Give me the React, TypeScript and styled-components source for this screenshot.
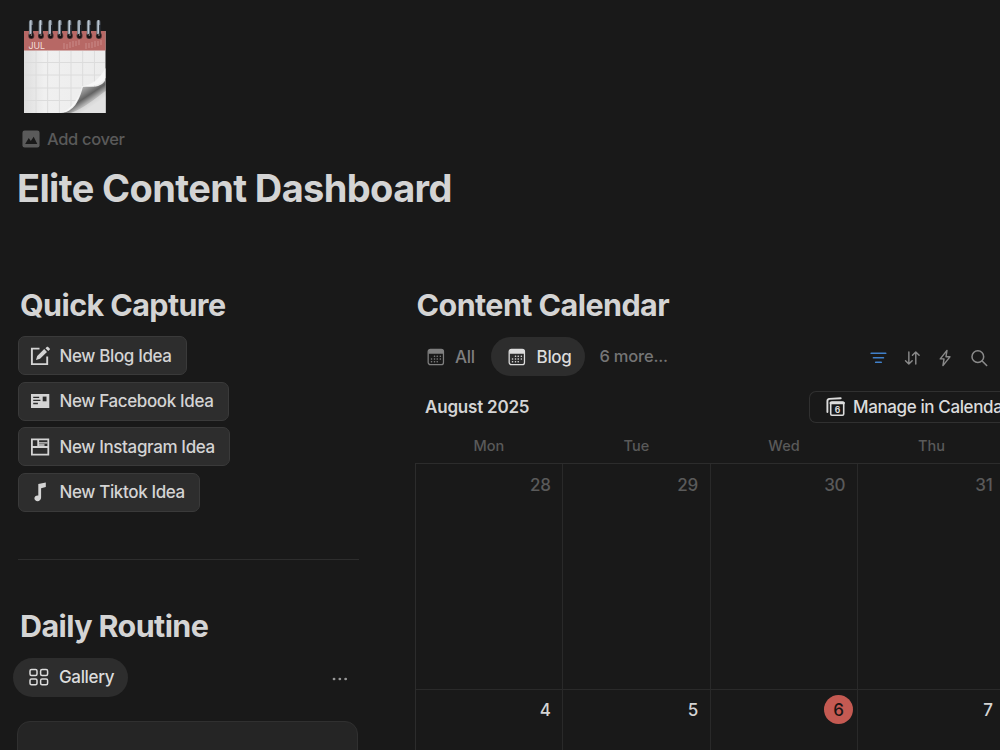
import type {FC, ReactNode} from 'react';
import styled, {createGlobalStyle, css} from 'styled-components';

const GlobalStyle = createGlobalStyle`
	* {
		box-sizing: border-box;
	}
	body {
		margin: 0;
		background: #191919;
		color: #d4d4d4;
		font-family: Inter, 'Liberation Sans', sans-serif;
		overflow: hidden;
	}
	svg {
		display: block;
		flex: none;
	}
`;

const Page = styled.div`
	width: 1000px;
	height: 750px;
	overflow: hidden;
	white-space: nowrap;
`;

const Header = styled.header`
	height: 286px;
	padding: 18px 0 0 18px;
`;

const AddCover = styled.div`
	display: flex;
	align-items: center;
	gap: 7px;
	height: 24px;
	margin: 12px 0 0 4px;
	color: #5a5a5a;
	font-size: 16.5px;
	font-weight: 500;
	letter-spacing: -0.35px;
`;

const Title = styled.h1`
	margin: 13px 0 0 -1px;
	font-size: 38px;
	line-height: 48px;
	font-weight: 700;
	letter-spacing: -0.63px;
`;

const Columns = styled.div`
	display: grid;
	grid-template-columns: 359px 585px;
	column-gap: 56px;
`;

const Sidebar = styled.section`
	padding-left: 18px;
`;

const Heading = styled.h2`
	margin: 0 0 0 2px;
	height: 38px;
	font-size: 30.5px;
	line-height: 37px;
	font-weight: 650;
	letter-spacing: -0.6px;
`;

const CaptureList = styled.div`
	display: flex;
	flex-direction: column;
	align-items: flex-start;
	gap: 6.6px;
	margin-top: 12px;
`;

const CaptureButton = styled.button`
	display: flex;
	align-items: center;
	gap: 9.5px;
	height: 39px;
	padding: 0 14.5px 0 11px;
	border: 1px solid #3a3a3a;
	border-radius: 7px;
	background: #2d2d2d;
	color: #d4d4d4;
	font-family: inherit;
	font-size: 17px;
	font-weight: 550;
	letter-spacing: -0.37px;
`;

const Divider = styled.hr`
	height: 1px;
	margin: 47px 0 0;
	border: 0;
	background: #2d2d2d;
`;

const RoutineHeading = styled(Heading)`
	margin-top: 47px;
`;

const RoutineBar = styled.div`
	display: flex;
	align-items: center;
	justify-content: space-between;
	margin: 13px 9px 0 -5px;
`;

const Tab = styled.div<{$active?: boolean}>`
	display: flex;
	align-items: center;
	gap: 10px;
	height: 39px;
	color: #7f7f7f;
	font-size: 17px;
	font-weight: 550;
	letter-spacing: -0.35px;
	${({$active}) =>
		$active &&
		css`
			padding: 0 14px 0 16px;
			border-radius: 20px;
			background: #2d2d2d;
			color: #dcdcdc;
		`}
`;

const BlogTab = styled(Tab)`
	gap: 11px;
	margin-left: 16px;
	padding-left: 17px;
`;

const GalleryCard = styled.div`
	height: 80px;
	margin: 24px 1px 0 -1px;
	border: 1px solid #303030;
	border-radius: 13px;
	background: #252525;
`;

const Calendar = styled.section`
	width: 585px;
`;

const CalendarHeading = styled(Heading)`
	margin-left: 1.5px;
	letter-spacing: -0.57px;
`;

const ViewBar = styled.div`
	display: flex;
	align-items: center;
	height: 39px;
	margin-top: 13px;
	padding-left: 12px;
`;

const MoreViews = styled.span`
	margin: -2px 0 0 14px;
	color: #757575;
	font-size: 16.5px;
	font-weight: 500;
	letter-spacing: -0.2px;
`;

const Tools = styled.div`
	display: flex;
	align-items: center;
	gap: 15.7px;
	margin: 3px 12px 0 auto;
	color: #8a8a8a;
`;

const MonthBar = styled.div`
	display: flex;
	align-items: center;
	justify-content: space-between;
	height: 32px;
	margin-top: 15px;
	padding-left: 10px;
	font-size: 17px;
	font-weight: 600;
	letter-spacing: -0.2px;
`;

const ManageButton = styled.button`
	display: flex;
	align-items: center;
	gap: 8px;
	width: 191px;
	height: 32px;
	padding: 0 0 0 15px;
	border: 1px solid #303030;
	border-right: 0;
	border-radius: 7px 0 0 7px;
	background: none;
	color: #dcdcdc;
	font-family: inherit;
	font-size: 17px;
	font-weight: 550;
	letter-spacing: -0.38px;
	overflow: hidden;
`;

const Weekdays = styled.div`
	display: grid;
	grid-template-columns: repeat(4, 147.6px);
	height: 40px;
	color: #5a5a5a;
	font-size: 14.5px;
	font-weight: 500;
	line-height: 45px;
	text-align: center;
`;

const DayGrid = styled.div`
	display: grid;
	grid-template-columns: repeat(4, 147.3px);
	grid-template-rows: 225.5px 70px;
	border-top: 1px solid #2c2c2c;
	border-left: 1px solid #2c2c2c;
`;

const Day = styled.div<{$muted?: boolean}>`
	display: flex;
	align-items: flex-start;
	justify-content: flex-end;
	padding: ${({$muted}) => ($muted ? 6 : 5)}px 11.5px 0 0;
	border-right: 1px solid #292929;
	border-bottom: 1px solid #2a2a2a;
	color: ${({$muted}) => ($muted ? '#5a5a5a' : '#d4d4d4')};
	font-size: 17px;
	font-weight: 500;
	line-height: 30px;
	letter-spacing: -0.2px;
`;

const Today = styled.span`
	width: 29px;
	height: 29px;
	margin-right: -7.5px;
	border-radius: 50%;
	background: #c45a52;
	color: #191414;
	text-align: center;
`;

const Icon: FC<{size?: number; children: ReactNode}> = ({
	size = 20,
	children,
}) => (
	<svg
		width={size}
		height={size}
		viewBox="0 0 20 20"
		fill="none"
		stroke="currentColor"
		strokeWidth="1.5"
		strokeLinecap="round"
		strokeLinejoin="round"
	>
		{children}
	</svg>
);

const rings = [0, 1, 2, 3, 4, 5, 6, 7];

const CalendarPicture = () => (
	<svg width="92" height="97" viewBox="0 0 92 97">
		<defs>
			<linearGradient id="ring" x1="0" x2="1">
				<stop offset="0" stopColor="#5c6871" />
				<stop offset="0.45" stopColor="#c4d0dd" />
				<stop offset="1" stopColor="#34383e" />
			</linearGradient>
			<linearGradient id="paper" x2="1">
				<stop stopColor="#dedede" />
				<stop offset="0.25" stopColor="#f0f0f0" />
				<stop offset="1" stopColor="#ececec" />
			</linearGradient>
			<linearGradient
				id="curl"
				gradientUnits="userSpaceOnUse"
				x1="62"
				y1="70"
				x2="74"
				y2="88"
			>
				<stop offset="0" stopColor="#b5b5b5" />
				<stop offset="0.3" stopColor="#858585" />
				<stop offset="0.5" stopColor="#626262" />
				<stop offset="0.75" stopColor="#b0b0b0" />
				<stop offset="1" stopColor="#dedede" />
			</linearGradient>
			<linearGradient id="fold" x1="0.2" y1="0.1" x2="0.8" y2="0.9">
				<stop stopColor="#f1f1f1" />
				<stop offset="1" stopColor="#fdfdfd" />
			</linearGradient>
		</defs>
		<path d="M6 13h81.5v82H6z" fill="url(#paper)" />
		<path d="M6 13h81.5v19.5H6z" fill="#b76865" />
		<path
			d="M18 33v62M29.7 33v62M41.4 33v62M53 33v62M64.7 33v62M76.4 33v62M6 44.5h81M6 57h81M6 70h81M6 82.5h81"
			stroke="#dcdcdc"
		/>
		<path d="M87.5 62V95H43C56 94 61 83 65 69C73 68 82 71 87.5 62z" fill="url(#curl)" />
		<path d="M53 95C66 90 78 80 87.5 73V95z" fill="#e3e3e3" opacity="0.65" />
		<path
			d="M43 95C55 93 61 82 64 68C73 69 82 68 87.5 60V50C81 62 73 67 65 68C60 81 53 92 43 95z"
			fill="url(#fold)"
		/>
		<path
			d="M46 25v6M49 26v5M52 24v6M55 23v6M58 23v5M61 22v5M68 25v6M71 25v5M74 24v6M77 23v6M80 23v5M83 22v5"
			stroke="#cf9692"
			strokeWidth="0.8"
		/>
		<text x="10.5" y="31" fill="#f3dfdd" fontSize="8.8" fontFamily="Inter, sans-serif">
			JUL
		</text>
		{rings.map((i) => (
			<g key={i} transform={`translate(${10.9 + i * 9.65} 2)`}>
				<ellipse cx="2.4" cy="15.8" rx="3" ry="3.2" fill="#493334" />
				<rect width="4.2" height="16" rx="2" fill="url(#ring)" />
				<path d="M3.5 5v11" stroke="#191d24" strokeWidth="1.3" />
				<circle cx="2.3" cy="16" r="2.2" fill="#171314" />
				<circle cx="2.5" cy="15" r="0.8" fill="#a49999" />
			</g>
		))}
	</svg>
);

const ImageIcon = () => (
	<Icon size={18}>
		<rect x="0.5" y="0.5" width="19" height="19" rx="2.5" fill="currentColor" stroke="none" />
		<path d="M3.5 15.5l4-6.5 2.3 3.3L13 7.5l4 8z" fill="#191919" stroke="none" />
	</Icon>
);

const ComposeIcon = () => (
	<Icon>
		<path
			d="M9.5 2.6H1.9v15.5h15.3v-7.6"
			strokeWidth="1.9"
			strokeLinecap="butt"
			strokeLinejoin="miter"
		/>
		<path
			d="M6 14.1l1.2-4.2 7-6.8 2.8 2.8-7 6.9zM15.4 2.2l1.6-1.4.9-.1 2 2v.9l-1.6 1.5z"
			fill="currentColor"
			stroke="none"
		/>
	</Icon>
);

const NewsIcon = () => (
	<Icon>
		<rect x="1" y="3" width="18.3" height="14" fill="currentColor" stroke="none" />
		<path
			d="M3.2 6.4h6M3.2 9.4h7.2M3.2 12.5h4.7"
			stroke="#2d2d2d"
			strokeWidth="1.3"
			strokeLinecap="butt"
		/>
		<rect x="12.7" y="5.6" width="3.8" height="4.7" fill="#2d2d2d" stroke="none" />
	</Icon>
);

const LayoutIcon = () => (
	<Icon>
		<path
			d="M1.9 2.3h16.4v15.4H1.9zM1.9 10h16.4M8.2 3v7"
			strokeWidth="1.8"
			strokeLinecap="butt"
			strokeLinejoin="miter"
		/>
		<path d="M8.5 5.9h9M9 8h5.5" strokeWidth="1.4" strokeLinecap="butt" />
	</Icon>
);

const NoteIcon = () => (
	<Icon>
		<path
			d="M8.3 1.9l7.5-1.5v4.7l-4.7 1.2v9.2c0 2-1.6 3.7-3.5 3.7-1.8 0-3.2-1.3-3.2-2.9 0-1.8 1.7-3.1 3.9-2.8z"
			fill="currentColor"
			stroke="none"
		/>
	</Icon>
);

const TableIcon = () => (
	<Icon size={18}>
		<rect x="1.3" y="1.5" width="17" height="17" rx="2.5" strokeWidth="1.4" />
		<path d="M1.5 6.4V4c0-1.5 1-2.5 2.5-2.5h11.6c1.5 0 2.5 1 2.5 2.5v2.4z" fill="currentColor" stroke="none" />
		<path
			d="M8.3 9.1h.1M11.3 9.1h.1M14.8 9.1h.1M5 12.2h.1M8.3 12.2h.1M11.3 12.2h.1M14.8 12.2h.1M5 15.2h.1M8.3 15.2h.1M11.3 15.2h.1"
			strokeWidth="1.7"
		/>
	</Icon>
);

const GalleryIcon = () => (
	<Icon>
		<rect x="1" y="2.6" width="7" height="5.8" rx="1.5" />
		<rect x="11.6" y="2.6" width="7" height="5.8" rx="1.5" />
		<rect x="1" y="12" width="7" height="5.8" rx="1.5" />
		<rect x="11.6" y="12" width="7" height="5.8" rx="1.5" />
	</Icon>
);

const DotsIcon = () => (
	<Icon>
		<path d="M4 12h.1M9.8 12h.1M15.6 12h.1" stroke="#969696" strokeWidth="2.7" />
	</Icon>
);

const FilterIcon = () => (
	<Icon size={18}>
		<path d="M2.5 4.7h16M5 9.7h11M7.5 14.7h6" stroke="#4080ca" strokeWidth="1.9" />
	</Icon>
);

const SortIcon = () => (
	<Icon size={18}>
		<path d="M6.5 3.3v13.4M2.8 13l3.7 3.7 3.7-3.7M14.2 16.7V3.3M10.5 7l3.7-3.7L17.9 7" strokeWidth="1.6" />
	</Icon>
);

const BoltIcon = () => (
	<Icon size={18}>
		<path d="M12.2 1.5L4.7 11h4.2l-1.2 7.5L15.5 8.7h-4.4z" strokeWidth="1.6" />
	</Icon>
);

const SearchIcon = () => (
	<Icon size={18}>
		<circle cx="8.7" cy="8.5" r="6.5" strokeWidth="1.7" />
		<path d="M13.5 13.3l5 5" strokeWidth="1.8" />
	</Icon>
);

const ManageIcon = () => (
	<Icon>
		<path d="M2.4 15V4c0-1.3.7-1.9 2-2.1l11.3-.6" strokeWidth="1.9" />
		<rect x="5.7" y="5" width="13" height="13.3" rx="1.2" strokeWidth="1.6" />
		<path d="M5.7 6h13" strokeWidth="2.4" />
		<text
			x="12.2"
			y="15.8"
			fill="currentColor"
			stroke="none"
			fontSize="8.5"
			fontWeight="700"
			textAnchor="middle"
		>
			6
		</text>
	</Icon>
);

const captures = [
	{label: 'New Blog Idea', icon: <ComposeIcon />},
	{label: 'New Facebook Idea', icon: <NewsIcon />},
	{label: 'New Instagram Idea', icon: <LayoutIcon />},
	{label: 'New Tiktok Idea', icon: <NoteIcon />},
];

const TODAY = 6;

const App: FC = () => {
	return (
		<Page>
			<GlobalStyle />
			<Header>
				<CalendarPicture />
				<AddCover>
					<ImageIcon />
					Add cover
				</AddCover>
				<Title>Elite Content Dashboard</Title>
			</Header>
			<Columns>
				<Sidebar>
					<Heading>Quick Capture</Heading>
					<CaptureList>
						{captures.map((c) => (
							<CaptureButton key={c.label}>
								{c.icon}
								{c.label}
							</CaptureButton>
						))}
					</CaptureList>
					<Divider />
					<RoutineHeading>Daily Routine</RoutineHeading>
					<RoutineBar>
						<Tab $active>
							<GalleryIcon />
							Gallery
						</Tab>
						<DotsIcon />
					</RoutineBar>
					<GalleryCard />
				</Sidebar>
				<Calendar>
					<CalendarHeading>Content Calendar</CalendarHeading>
					<ViewBar>
						<Tab>
							<TableIcon />
							All
						</Tab>
						<BlogTab $active>
							<TableIcon />
							Blog
						</BlogTab>
						<MoreViews>6 more...</MoreViews>
						<Tools>
							<FilterIcon />
							<SortIcon />
							<BoltIcon />
							<SearchIcon />
						</Tools>
					</ViewBar>
					<MonthBar>
						August 2025
						<ManageButton>
							<ManageIcon />
							Manage in Calenda
						</ManageButton>
					</MonthBar>
					<Weekdays>
						{['Mon', 'Tue', 'Wed', 'Thu'].map((d) => (
							<span key={d}>{d}</span>
						))}
					</Weekdays>
					<DayGrid>
						{[28, 29, 30, 31].map((d) => (
							<Day key={d} $muted>
								{d}
							</Day>
						))}
						{[4, 5, 6, 7].map((d) => (
							<Day key={d}>{d === TODAY ? <Today>{d}</Today> : d}</Day>
						))}
					</DayGrid>
				</Calendar>
			</Columns>
		</Page>
	);
};

export default App;
